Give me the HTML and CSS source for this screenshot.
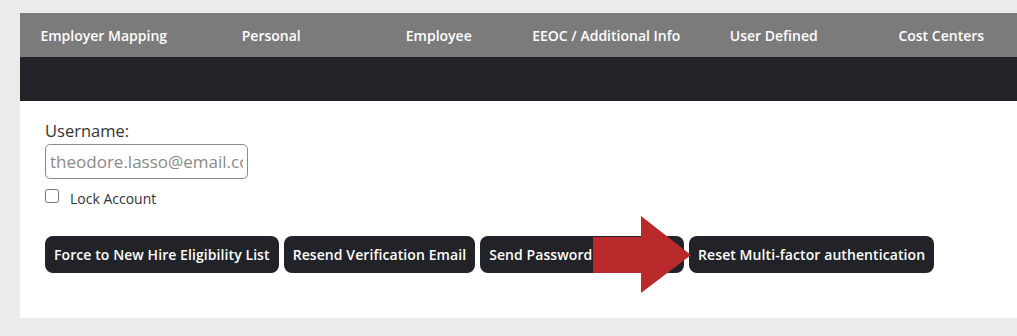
FILE: index.html
```html
<!DOCTYPE html>
<html lang="en">
<head>
<meta charset="utf-8">
<title>User Account</title>
<link rel="stylesheet" href="styles.css">
</head>
<body>
<div class="panel">
  <nav class="tabs">
    <span class="tab">Employer Mapping</span>
    <span class="tab">Personal</span>
    <span class="tab">Employee</span>
    <span class="tab">EEOC / Additional Info</span>
    <span class="tab">User Defined</span>
    <span class="tab">Cost Centers</span>
  </nav>
  <div class="subbar"></div>
  <div class="content">
    <label class="field-label" for="username">Username:</label>
    <input class="field-input" id="username" type="text" placeholder="theodore.lasso@email.com">
    <label class="check-row"><input type="checkbox" class="check"><span class="check-text">Lock Account</span></label>
    <div class="actions">
      <button class="btn">Force to New Hire Eligibility List</button>
      <button class="btn">Resend Verification Email</button>
      <button class="btn">Send Password Reset Email</button>
      <button class="btn">Reset Multi-factor authentication</button>
      <svg class="arrow" width="98" height="77" viewBox="0 0 98 77" aria-hidden="true">
        <polygon points="0,21 48,21 48,0 98,39 48,77 48,57 0,57" fill="#b92a2c"/>
      </svg>
    </div>
  </div>
</div>
</body>
</html>
```
FILE: styles.css
```css
html, body {
  margin: 0;
  padding: 0;
  overflow: hidden;
}
body {
  background: #ebebeb;
  font-family: "Open Sans", "Liberation Sans", sans-serif;
  width: 1017px;
  height: 336px;
}
.panel {
  margin: 13px 0 0 20px;
  width: 1005px;
  height: 305px;
  background: #ffffff;
}
.tabs {
  display: grid;
  grid-template-columns: repeat(6, 1fr);
  align-items: center;
  height: 44px;
  background: #7b7b7b;
}
.tab {
  text-align: center;
  color: #ffffff;
  font-size: 14px;
  font-weight: 600;
}
.subbar {
  height: 44px;
  background: #212328;
}
.content {
  display: flex;
  flex-direction: column;
  align-items: flex-start;
  padding: 20px 25px 0;
}
.field-label {
  font-size: 16.5px;
  line-height: 20px;
  color: #333333;
  margin-bottom: 3px;
}
.field-input {
  box-sizing: border-box;
  width: 203px;
  height: 35px;
  border: 1px solid #8a8a8a;
  border-radius: 5px;
  padding: 0 4px;
  font-family: "Open Sans", "Liberation Sans", sans-serif;
  font-size: 17px;
  color: #333;
}
.field-input::placeholder {
  color: #8a8a8a;
}
.check-row {
  display: flex;
  align-items: center;
  height: 20px;
  margin-top: 7px;
}
.check {
  width: 14px;
  height: 14px;
  margin: 0;
}
.check-text {
  margin-left: 11px;
  padding-top: 4px;
  font-size: 14px;
  color: #333333;
}
.actions {
  position: relative;
  display: flex;
  gap: 5px;
  margin-top: 30px;
}
.btn {
  height: 37px;
  padding: 0 9px;
  border: none;
  border-radius: 8px;
  background: #212328;
  color: #ffffff;
  font-family: "Open Sans", "Liberation Sans", sans-serif;
  font-size: 14px;
  font-weight: 600;
  letter-spacing: 0.08px;
  white-space: nowrap;
}
.arrow {
  position: absolute;
  left: 548px;
  top: -20px;
}
```
